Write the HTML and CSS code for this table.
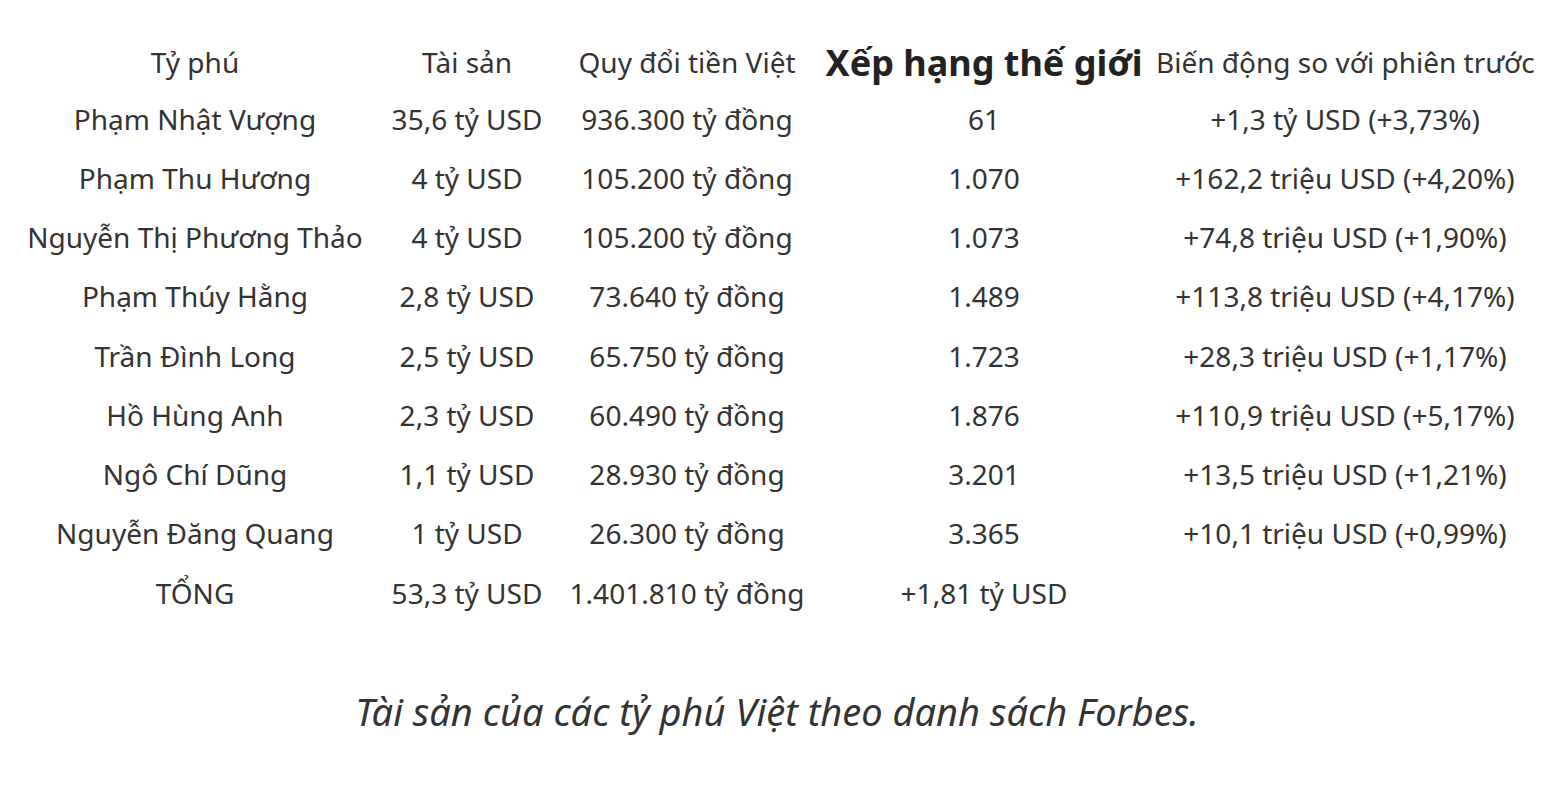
FILE: index.html
```html
<!DOCTYPE html>
<html lang="vi">
<head>
<meta charset="utf-8">
<link rel="stylesheet" href="styles.css">
</head>
<body>
<figure class="fig">
<table class="tbl">
<colgroup>
<col class="c1"><col class="c2"><col class="c3"><col class="c4"><col class="c5">
</colgroup>
<thead>
<tr><th>Tỷ phú</th><th>Tài sản</th><th>Quy đổi tiền Việt</th><th class="big">Xếp hạng thế giới</th><th>Biến động so với phiên trước</th></tr>
</thead>
<tbody>
<tr><td>Phạm Nhật Vượng</td><td>35,6 tỷ USD</td><td>936.300 tỷ đồng</td><td>61</td><td>+1,3 tỷ USD (+3,73%)</td></tr>
<tr><td>Phạm Thu Hương</td><td>4 tỷ USD</td><td>105.200 tỷ đồng</td><td>1.070</td><td>+162,2 triệu USD (+4,20%)</td></tr>
<tr><td>Nguyễn Thị Phương Thảo</td><td>4 tỷ USD</td><td>105.200 tỷ đồng</td><td>1.073</td><td>+74,8 triệu USD (+1,90%)</td></tr>
<tr><td>Phạm Thúy Hằng</td><td>2,8 tỷ USD</td><td>73.640 tỷ đồng</td><td>1.489</td><td>+113,8 triệu USD (+4,17%)</td></tr>
<tr><td>Trần Đình Long</td><td>2,5 tỷ USD</td><td>65.750 tỷ đồng</td><td>1.723</td><td>+28,3 triệu USD (+1,17%)</td></tr>
<tr><td>Hồ Hùng Anh</td><td>2,3 tỷ USD</td><td>60.490 tỷ đồng</td><td>1.876</td><td>+110,9 triệu USD (+5,17%)</td></tr>
<tr><td>Ngô Chí Dũng</td><td>1,1 tỷ USD</td><td>28.930 tỷ đồng</td><td>3.201</td><td>+13,5 triệu USD (+1,21%)</td></tr>
<tr><td>Nguyễn Đăng Quang</td><td>1 tỷ USD</td><td>26.300 tỷ đồng</td><td>3.365</td><td>+10,1 triệu USD (+0,99%)</td></tr>
<tr><td>TỔNG</td><td>53,3 tỷ USD</td><td>1.401.810 tỷ đồng</td><td>+1,81 tỷ USD</td><td></td></tr>
</tbody>
</table>
<figcaption class="cap">Tài sản của các tỷ phú Việt theo danh sách Forbes.</figcaption>
</figure>
</body>
</html>
```

FILE: styles.css
```css
html, body {
  margin: 0;
  padding: 0;
  background: #fff;
}
body {
  font-family: "Noto Sans", "Open Sans", sans-serif;
  color: #333;
}
.fig {
  margin: 0;
  padding: 35px 0 0 18px;
  display: flex;
  flex-direction: column;
  align-items: flex-start;
}
.tbl {
  border-collapse: collapse;
  table-layout: fixed;
  width: 1516px;
}
.c1 { width: 354px; }
.c2 { width: 190px; }
.c3 { width: 250px; }
.c4 { width: 344px; }
.c5 { width: 378px; }
.tbl th, .tbl td {
  text-align: center;
  white-space: nowrap;
  padding: 0;
  height: 59.25px;
  font-size: 28px;
  font-weight: normal;
}
.tbl th {
  height: 54px;
  vertical-align: middle;
}
.tbl th.big {
  font-size: 36px;
  font-weight: bold;
  color: #222;
}
.cap {
  align-self: center;
  margin: 63px 0 0 -28px;
  font-size: 38px;
  font-style: italic;
  color: #333;
}
```
